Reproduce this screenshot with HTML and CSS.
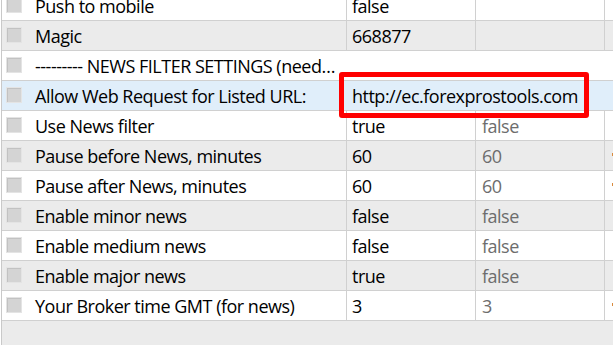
FILE: index.html
```html
<!DOCTYPE html>
<html lang="en">
<head>
  <meta charset="UTF-8">
  <title>Inputs</title>
  <link rel="stylesheet" href="styles.css">
</head>
<body>
<div class="list">
  <div class="row">
    <div class="cell name"><span class="check"></span>Push to mobile</div>
    <div class="cell value">false</div>
    <div class="cell def"></div>
    <div class="cell extra"></div>
  </div>
  <div class="row alt">
    <div class="cell name"><span class="check"></span>Magic</div>
    <div class="cell value">668877</div>
    <div class="cell def"></div>
    <div class="cell extra"></div>
  </div>
  <div class="row section">
    <div class="cell name"><span class="check"></span><span class="clip">--------- NEWS FILTER SETTINGS (needs WebRequest)</span></div>
  </div>
  <div class="row selected">
    <div class="cell name"><span class="check"></span>Allow Web Request for Listed URL:</div>
    <div class="cell value wide">http://ec.forexprostools.com</div>
    <div class="mark"></div>
  </div>
  <div class="row">
    <div class="cell name"><span class="check"></span>Use News filter</div>
    <div class="cell value">true</div>
    <div class="cell def">false</div>
    <div class="cell extra"></div>
  </div>
  <div class="row alt">
    <div class="cell name"><span class="check"></span>Pause before News, minutes</div>
    <div class="cell value">60</div>
    <div class="cell def">60</div>
    <div class="cell extra"><span class="dot"></span></div>
  </div>
  <div class="row">
    <div class="cell name"><span class="check"></span>Pause after News, minutes</div>
    <div class="cell value">60</div>
    <div class="cell def">60</div>
    <div class="cell extra"><span class="dot"></span></div>
  </div>
  <div class="row alt">
    <div class="cell name"><span class="check"></span>Enable minor news</div>
    <div class="cell value">false</div>
    <div class="cell def">false</div>
    <div class="cell extra"></div>
  </div>
  <div class="row">
    <div class="cell name"><span class="check"></span>Enable medium news</div>
    <div class="cell value">false</div>
    <div class="cell def">false</div>
    <div class="cell extra"></div>
  </div>
  <div class="row alt">
    <div class="cell name"><span class="check"></span>Enable major news</div>
    <div class="cell value">true</div>
    <div class="cell def">false</div>
    <div class="cell extra"></div>
  </div>
  <div class="row">
    <div class="cell name"><span class="check"></span>Your Broker time GMT (for news)</div>
    <div class="cell value">3</div>
    <div class="cell def">3</div>
    <div class="cell extra"><span class="dot"></span></div>
  </div>
  <div class="empty"></div>
</div>
</body>
</html>
```

FILE: styles.css
```css
body {
  margin: 0;
  background-color: white;
  color: #000;
  font-family: "Open Sans", "Noto Sans", sans-serif;
  font-size: 18px;
  letter-spacing: -0.5px;
  overflow: hidden;
}
.list {
  margin-top: -9px;
  margin-left: 1px;
  border-left: 1px solid #c9c9c9;
  height: 360px;
  display: flex;
  flex-direction: column;
}
.row {
  position: relative;
  display: grid;
  grid-template-columns: 344px 129px 129px 1fr;
  flex: none;
  height: 29px;
  border-bottom: 1px solid #d0d0d0;
  background-color: white;
}
.row.alt {
  background-color: #ebebeb;
}
.row.selected {
  background-color: #e0eefa;
  grid-template-columns: 344px 1fr;
}
.row.section {
  grid-template-columns: 1fr;
}
.cell {
  display: flex;
  align-items: center;
  line-height: 29px;
  padding-top: 1px;
  white-space: nowrap;
  overflow: hidden;
}
.name {
  padding-left: 4px;
}
.section .name {
  width: 336px;
}
.clip {
  overflow: hidden;
  text-overflow: ellipsis;
  min-width: 0;
}
.value,
.def,
.extra {
  border-left: 1px solid #d0d0d0;
  padding-left: 5px;
}
.def {
  padding-left: 6px;
  color: #6d6d6d;
}
.value.wide {
  border-left: none;
  padding-left: 6px;
}
.check {
  flex: none;
  width: 14px;
  height: 14px;
  margin-right: 13px;
  margin-top: -3px;
  background-color: #d4d4d4;
  border: 1px solid #e4e4e4;
  box-shadow: inset 1px 1px 0 #c2c2c2;
}
.dot {
  display: block;
  width: 1px;
  height: 3px;
  margin-left: 2px;
  margin-top: -3px;
  background-color: #d98a3c;
}
.mark {
  position: absolute;
  z-index: 1;
  left: 337px;
  top: -9px;
  width: 240px;
  height: 36px;
  border: 5px solid #ff0000;
  border-radius: 3px;
}
.empty {
  flex: 1;
  background-color: #ebebeb;
}
```
